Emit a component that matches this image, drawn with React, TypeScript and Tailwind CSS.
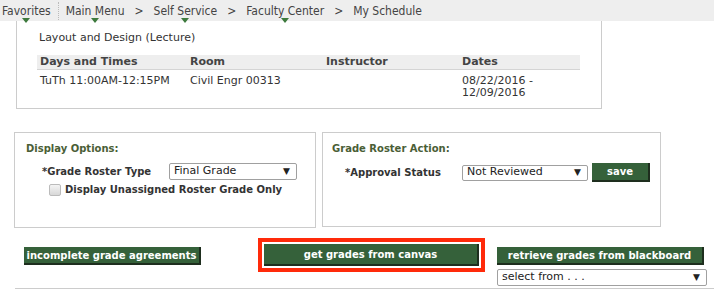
import React from "react";

const Tri = () => (
  <span className="absolute left-1/2 -translate-x-1/2 top-[16px] w-0 h-0 border-l-[4px] border-r-[4px] border-t-[5px] border-l-transparent border-r-transparent border-t-[#3d7a3d]" />
);

const NavItem = ({ label, tri }: { label: string; tri?: boolean }) => (
  <span className="relative">
    {label}
    {tri && <Tri />}
  </span>
);

const Select = ({ text, w, h = 17 }: { text: string; w: number; h?: number }) => (
  <div
    className="flex items-center justify-between border border-[#a0a0a0] rounded-[2px] bg-white pl-[4px] pr-[6px] text-[11px] text-[#222]"
    style={{ width: w, height: h }}
  >
    <span>{text}</span>
    <span className="text-[9px]">▼</span>
  </div>
);

const GreenBtn = ({ label, w, h = 18 }: { label: string; w: number; h?: number }) => (
  <div
    className="flex items-center justify-center whitespace-nowrap bg-[#35613a] text-white font-bold text-[10px] border-r-2 border-b-2 border-[#1e2e1e]"
    style={{ width: w, height: h }}
  >
    {label}
  </div>
);

export default function App() {
  return (
    <div className="w-[714px] h-[289px] bg-white overflow-hidden relative" style={{ fontFamily: '"DejaVu Sans", Verdana, sans-serif' }}>
      {/* nav */}
      <div className="h-[21px] bg-[#eeeeee] flex items-center text-[12px] text-[#444] pl-[2px]" style={{ fontFamily: '"DejaVu Sans Condensed", "DejaVu Sans", sans-serif' }}>
        <NavItem label="Favorites" tri />
        <span className="mx-[7px] h-[18px] border-l border-dotted border-[#bbb]" />
        <NavItem label="Main Menu" tri />
        <span className="mx-[10px]">&gt;</span>
        <NavItem label="Self Service" tri />
        <span className="mx-[10px]">&gt;</span>
        <NavItem label="Faculty Center" tri />
        <span className="mx-[10px]">&gt;</span>
        <NavItem label="My Schedule" />
      </div>

      {/* schedule card */}
      <div className="ml-[16px] w-[586px] h-[88px] border-l border-r border-b border-[#cccccc] pl-[20px] pt-[10px] text-[11px] text-[#333]">
        <div className="pl-[2px] h-[14px] leading-[14px]">Layout and Design (Lecture)</div>
        <div className="mt-[10px] w-[543px]">
          <div className="flex h-[15px] items-center bg-[#eeeeee] border-b border-[#d4d4d4] font-bold text-[#444]">
            <span className="w-[153px] pl-[3px]">Days and Times</span>
            <span className="w-[136px]">Room</span>
            <span className="w-[136px]">Instructor</span>
            <span>Dates</span>
          </div>
          <div className="flex pt-[5px] leading-[12px]">
            <span className="w-[153px] pl-[3px]">TuTh 11:00AM-12:15PM</span>
            <span className="w-[136px]">Civil Engr 00313</span>
            <span className="w-[136px]"></span>
            <span>08/22/2016 -<br />12/09/2016</span>
          </div>
        </div>
      </div>

      {/* option boxes */}
      <div className="flex mt-[23px] ml-[14px] gap-[6px] text-[11px]">
        <div className="w-[302px] h-[96px] border border-[#cccccc] pl-[11px] pt-[9px]">
          <div className="font-bold text-[10px] text-[#4a5e36] leading-[13px]">Display Options:</div>
          <div className="flex items-center mt-[8px] pl-[16px]">
            <span className="font-bold text-[10px] text-[#333] w-[127px]">*Grade Roster Type</span>
            <Select text="Final Grade" w={128} />
          </div>
          <div className="flex items-center mt-[2px] pl-[23px]">
            <span className="w-[12px] h-[12px] rounded-[2px] border border-[#bbb] bg-gradient-to-b from-[#f4f4f4] to-[#d8d8d8]" />
            <span className="font-bold text-[10px] text-[#333] ml-[4px]">Display Unassigned Roster Grade Only</span>
          </div>
        </div>
        <div className="w-[339px] h-[95px] border border-[#cccccc] pl-[9px] pt-[9px]">
          <div className="font-bold text-[10px] text-[#4a5e36] leading-[13px]">Grade Roster Action:</div>
          <div className="flex items-center mt-[8px] pl-[13px]">
            <span className="font-bold text-[10px] text-[#333] w-[117px]">*Approval Status</span>
            <Select text="Not Reviewed" w={126} h={16} />
            <div className="ml-[4px]">
              <GreenBtn label="save" w={58} h={19} />
            </div>
          </div>
        </div>
      </div>

      {/* buttons */}
      <div className="flex ml-[24px] mt-[10px] items-start">
        <div className="mt-[9px]">
          <GreenBtn label="incomplete grade agreements" w={177} />
        </div>
        <div className="ml-[57px] border-[4px] border-[#ff2a0a] p-[2px] bg-white">
          <GreenBtn label="get grades from canvas" w={215} h={22} />
        </div>
        <div className="ml-[12px] mt-[9px] flex flex-col gap-[4px]">
          <GreenBtn label="retrieve grades from blackboard" w={207} />
          <Select text="select from . . ." w={210} />
        </div>
      </div>
      <div className="absolute left-[15px] right-0 top-[288px] border-t border-[#cccccc]" />
    </div>
  );
}
